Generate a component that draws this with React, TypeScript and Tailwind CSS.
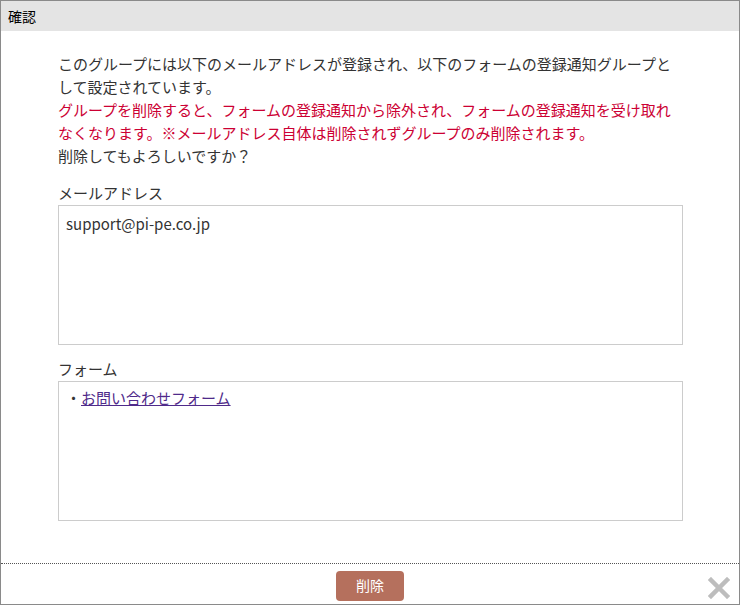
import React from 'react';

const font = { fontFamily: '"Noto Sans CJK JP", "Noto Sans", sans-serif' };

export default function App() {
  return (
    <div
      className="w-[740px] h-[605px] border border-[#8a8a8a] bg-white flex flex-col text-[#333]"
      style={font}
    >
      {/* Header */}
      <div className="h-[30px] bg-[#e4e4e4] px-[7px] flex items-center text-[14px] text-black">
        確認
      </div>

      {/* Body */}
      <div className="flex-1 pl-[57px] pr-[56px] pt-[21px]">
        <div className="text-[15px] leading-[23px]">
          <p>このグループには以下のメールアドレスが登録され、以下のフォームの登録通知グループとして設定されています。</p>
          <p className="text-[#cc0033]">
            グループを削除すると、フォームの登録通知から除外され、フォームの登録通知を受け取れなくなります。※メールアドレス自体は削除されずグループのみ削除されます。
          </p>
          <p>削除してもよろしいですか？</p>
        </div>

        <div className="mt-[14px] text-[15px] leading-[23px]">メールアドレス</div>
        <div className="mt-px h-[140px] border border-[#cccccc] px-[7px] py-[7px] text-[15px] leading-[22px]">
          support@pi-pe.co.jp
        </div>

        <div className="mt-[12px] text-[15px] leading-[23px]">フォーム</div>
        <div className="mt-px h-[140px] border border-[#cccccc] px-[7px] pt-[4px] text-[15px] leading-[23px]">
          <span>・</span>
          <a href="#" className="text-[#4f2a8a] underline">
            お問い合わせフォーム
          </a>
        </div>
      </div>

      {/* Footer */}
      <div className="relative h-[41px] border-t border-dotted border-[#555] flex items-center justify-center">
        <button className="w-[68px] h-[30px] rounded-[4px] bg-[#b5705d] text-white text-[14px] mt-[3px]">
          削除
        </button>
        <svg
          className="absolute right-[9px] top-[13px]"
          width="22"
          height="22"
          viewBox="0 0 22 22"
        >
          <path d="M3 3 L19 19 M19 3 L3 19" stroke="#bdbdbd" strokeWidth="4.5" strokeLinecap="square" />
        </svg>
      </div>
    </div>
  );
}
